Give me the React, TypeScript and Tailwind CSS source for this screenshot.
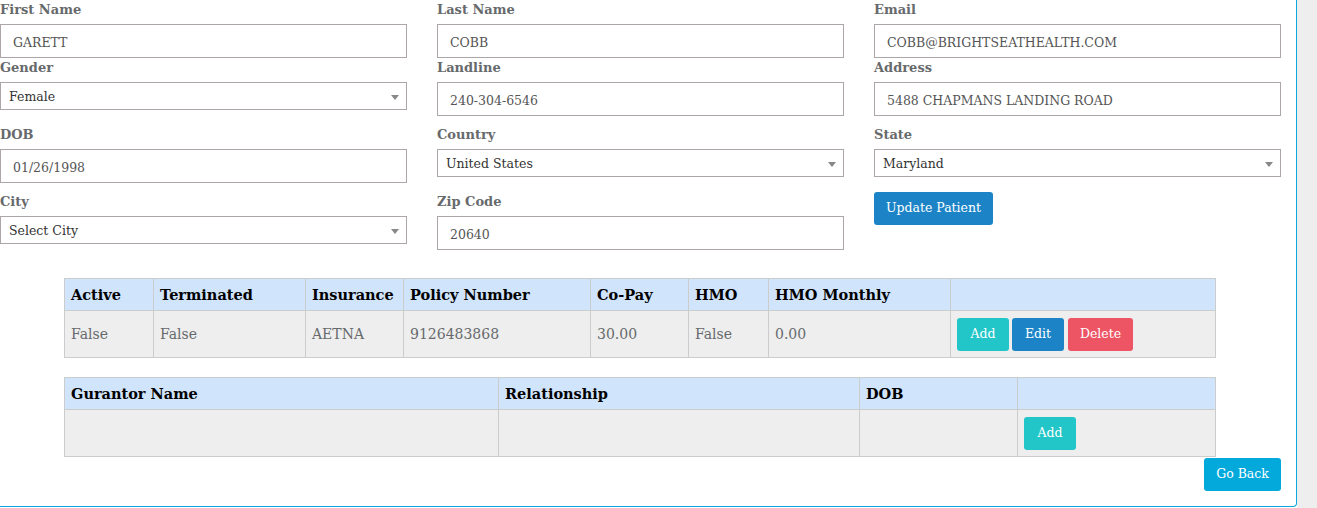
import React from 'react';

const font = { fontFamily: '"DejaVu Serif", "Liberation Serif", serif' };

function Label({ children }: { children: React.ReactNode }) {
  return (
    <div className="h-[24px] pt-[1px] text-[13px] font-bold leading-[18px] text-[#676a6c]">
      {children}
    </div>
  );
}

function TextField({ label, value }: { label: string; value: string }) {
  return (
    <div>
      <Label>{label}</Label>
      <input
        readOnly
        value={value}
        className="block h-[34px] w-full border border-[#aca6aa] bg-white px-[12px] pt-[2px] text-[12.5px] text-[#555] outline-none"
      />
    </div>
  );
}

function SelectField({ label, value }: { label: string; value: string }) {
  return (
    <div>
      <Label>{label}</Label>
      <div className="flex h-[28px] w-full items-center justify-between border border-[#aca6aa] bg-white pl-[8px] pr-[7px] pt-[2px] text-[12.5px] text-[#333]">
        <span>{value}</span>
        <span className="h-0 w-0 border-x-[4px] border-t-[5px] border-x-transparent border-t-[#888]" />
      </div>
    </div>
  );
}

function Btn({ color, children, className = '' }: { color: string; children: React.ReactNode; className?: string }) {
  return (
    <button className={`h-[33px] whitespace-nowrap rounded-[3px] text-[12.5px] text-white ${color} ${className}`}>
      {children}
    </button>
  );
}

const policyCols = [
  { title: 'Active', w: 89, v: 'False' },
  { title: 'Terminated', w: 152, v: 'False' },
  { title: 'Insurance', w: 98, v: 'AETNA' },
  { title: 'Policy Number', w: 187, v: '9126483868' },
  { title: 'Co-Pay', w: 98, v: '30.00' },
  { title: 'HMO', w: 80, v: 'False' },
  { title: 'HMO Monthly', w: 182, v: '0.00' },
];

const guarantorCols = [
  { title: 'Gurantor Name', w: 434 },
  { title: 'Relationship', w: 361 },
  { title: 'DOB', w: 158 },
];

export default function App() {
  return (
    <div className="flex h-[508px] w-[1317px] overflow-hidden bg-white" style={font}>
      <div className="w-[1297px] shrink-0">
        <div className="h-[507px] rounded-br-[4px] border-b border-r border-[#0aa8dc] pr-[15px]">
          {/* form rows */}
          <div className="grid grid-cols-3 gap-x-[30px]">
            <TextField label="First Name" value="GARETT" />
            <TextField label="Last Name" value="COBB" />
            <TextField label="Email" value="COBB@BRIGHTSEATHEALTH.COM" />
          </div>
          <div className="grid grid-cols-3 gap-x-[30px]">
            <SelectField label="Gender" value="Female" />
            <TextField label="Landline" value="240-304-6546" />
            <TextField label="Address" value="5488 CHAPMANS LANDING ROAD" />
          </div>
          <div className="mt-[9px] grid grid-cols-3 gap-x-[30px]">
            <TextField label="DOB" value="01/26/1998" />
            <SelectField label="Country" value="United States" />
            <SelectField label="State" value="Maryland" />
          </div>
          <div className="mt-[9px] grid grid-cols-3 gap-x-[30px]">
            <SelectField label="City" value="Select City" />
            <TextField label="Zip Code" value="20640" />
            <div>
              <Btn color="bg-[#1c84c6]" className="w-[119px]">Update Patient</Btn>
            </div>
          </div>

          {/* policy table */}
          <table className="ml-[64px] mt-[28px] w-[1152px] border-collapse">
            <thead>
              <tr className="h-[32px] bg-[#d0e4fb]">
                {policyCols.map((c) => (
                  <th
                    key={c.title}
                    style={{ width: c.w }}
                    className="border border-[#cccccc] px-[6px] pt-[1px] text-left text-[14.5px] font-bold text-black"
                  >
                    {c.title}
                  </th>
                ))}
                <th className="border border-[#cccccc]" />
              </tr>
            </thead>
            <tbody>
              <tr className="h-[47px] bg-[#eeeeee]">
                {policyCols.map((c) => (
                  <td key={c.title} className="border border-[#cccccc] px-[6px] text-[14px] text-[#676a6c]">
                    {c.v}
                  </td>
                ))}
                <td className="border border-[#cccccc] px-[6px]">
                  <div className="flex gap-[3px]">
                    <Btn color="bg-[#23c6c8]" className="w-[52px]">Add</Btn>
                    <Btn color="bg-[#1c84c6]" className="w-[52px]">Edit</Btn>
                    <Btn color="bg-[#ed5565]" className="ml-[1px] w-[65px]">Delete</Btn>
                  </div>
                </td>
              </tr>
            </tbody>
          </table>

          {/* guarantor table */}
          <table className="ml-[64px] mt-[19px] w-[1152px] border-collapse">
            <thead>
              <tr className="h-[32px] bg-[#d0e4fb]">
                {guarantorCols.map((c) => (
                  <th
                    key={c.title}
                    style={{ width: c.w }}
                    className="border border-[#cccccc] px-[6px] pt-[1px] text-left text-[14.5px] font-bold text-black"
                  >
                    {c.title}
                  </th>
                ))}
                <th className="border border-[#cccccc]" />
              </tr>
            </thead>
            <tbody>
              <tr className="h-[47px] bg-[#eeeeee]">
                {guarantorCols.map((c) => (
                  <td key={c.title} className="border border-[#cccccc]" />
                ))}
                <td className="border border-[#cccccc] px-[6px]">
                  <Btn color="bg-[#23c6c8]" className="w-[52px]">Add</Btn>
                </td>
              </tr>
            </tbody>
          </table>

          <div className="mt-[1px] flex justify-end">
            <Btn color="bg-[#03a9db]" className="w-[77px]">Go Back</Btn>
          </div>
        </div>
      </div>
      <div className="flex-1 bg-[#eeeeee]" />
    </div>
  );
}
